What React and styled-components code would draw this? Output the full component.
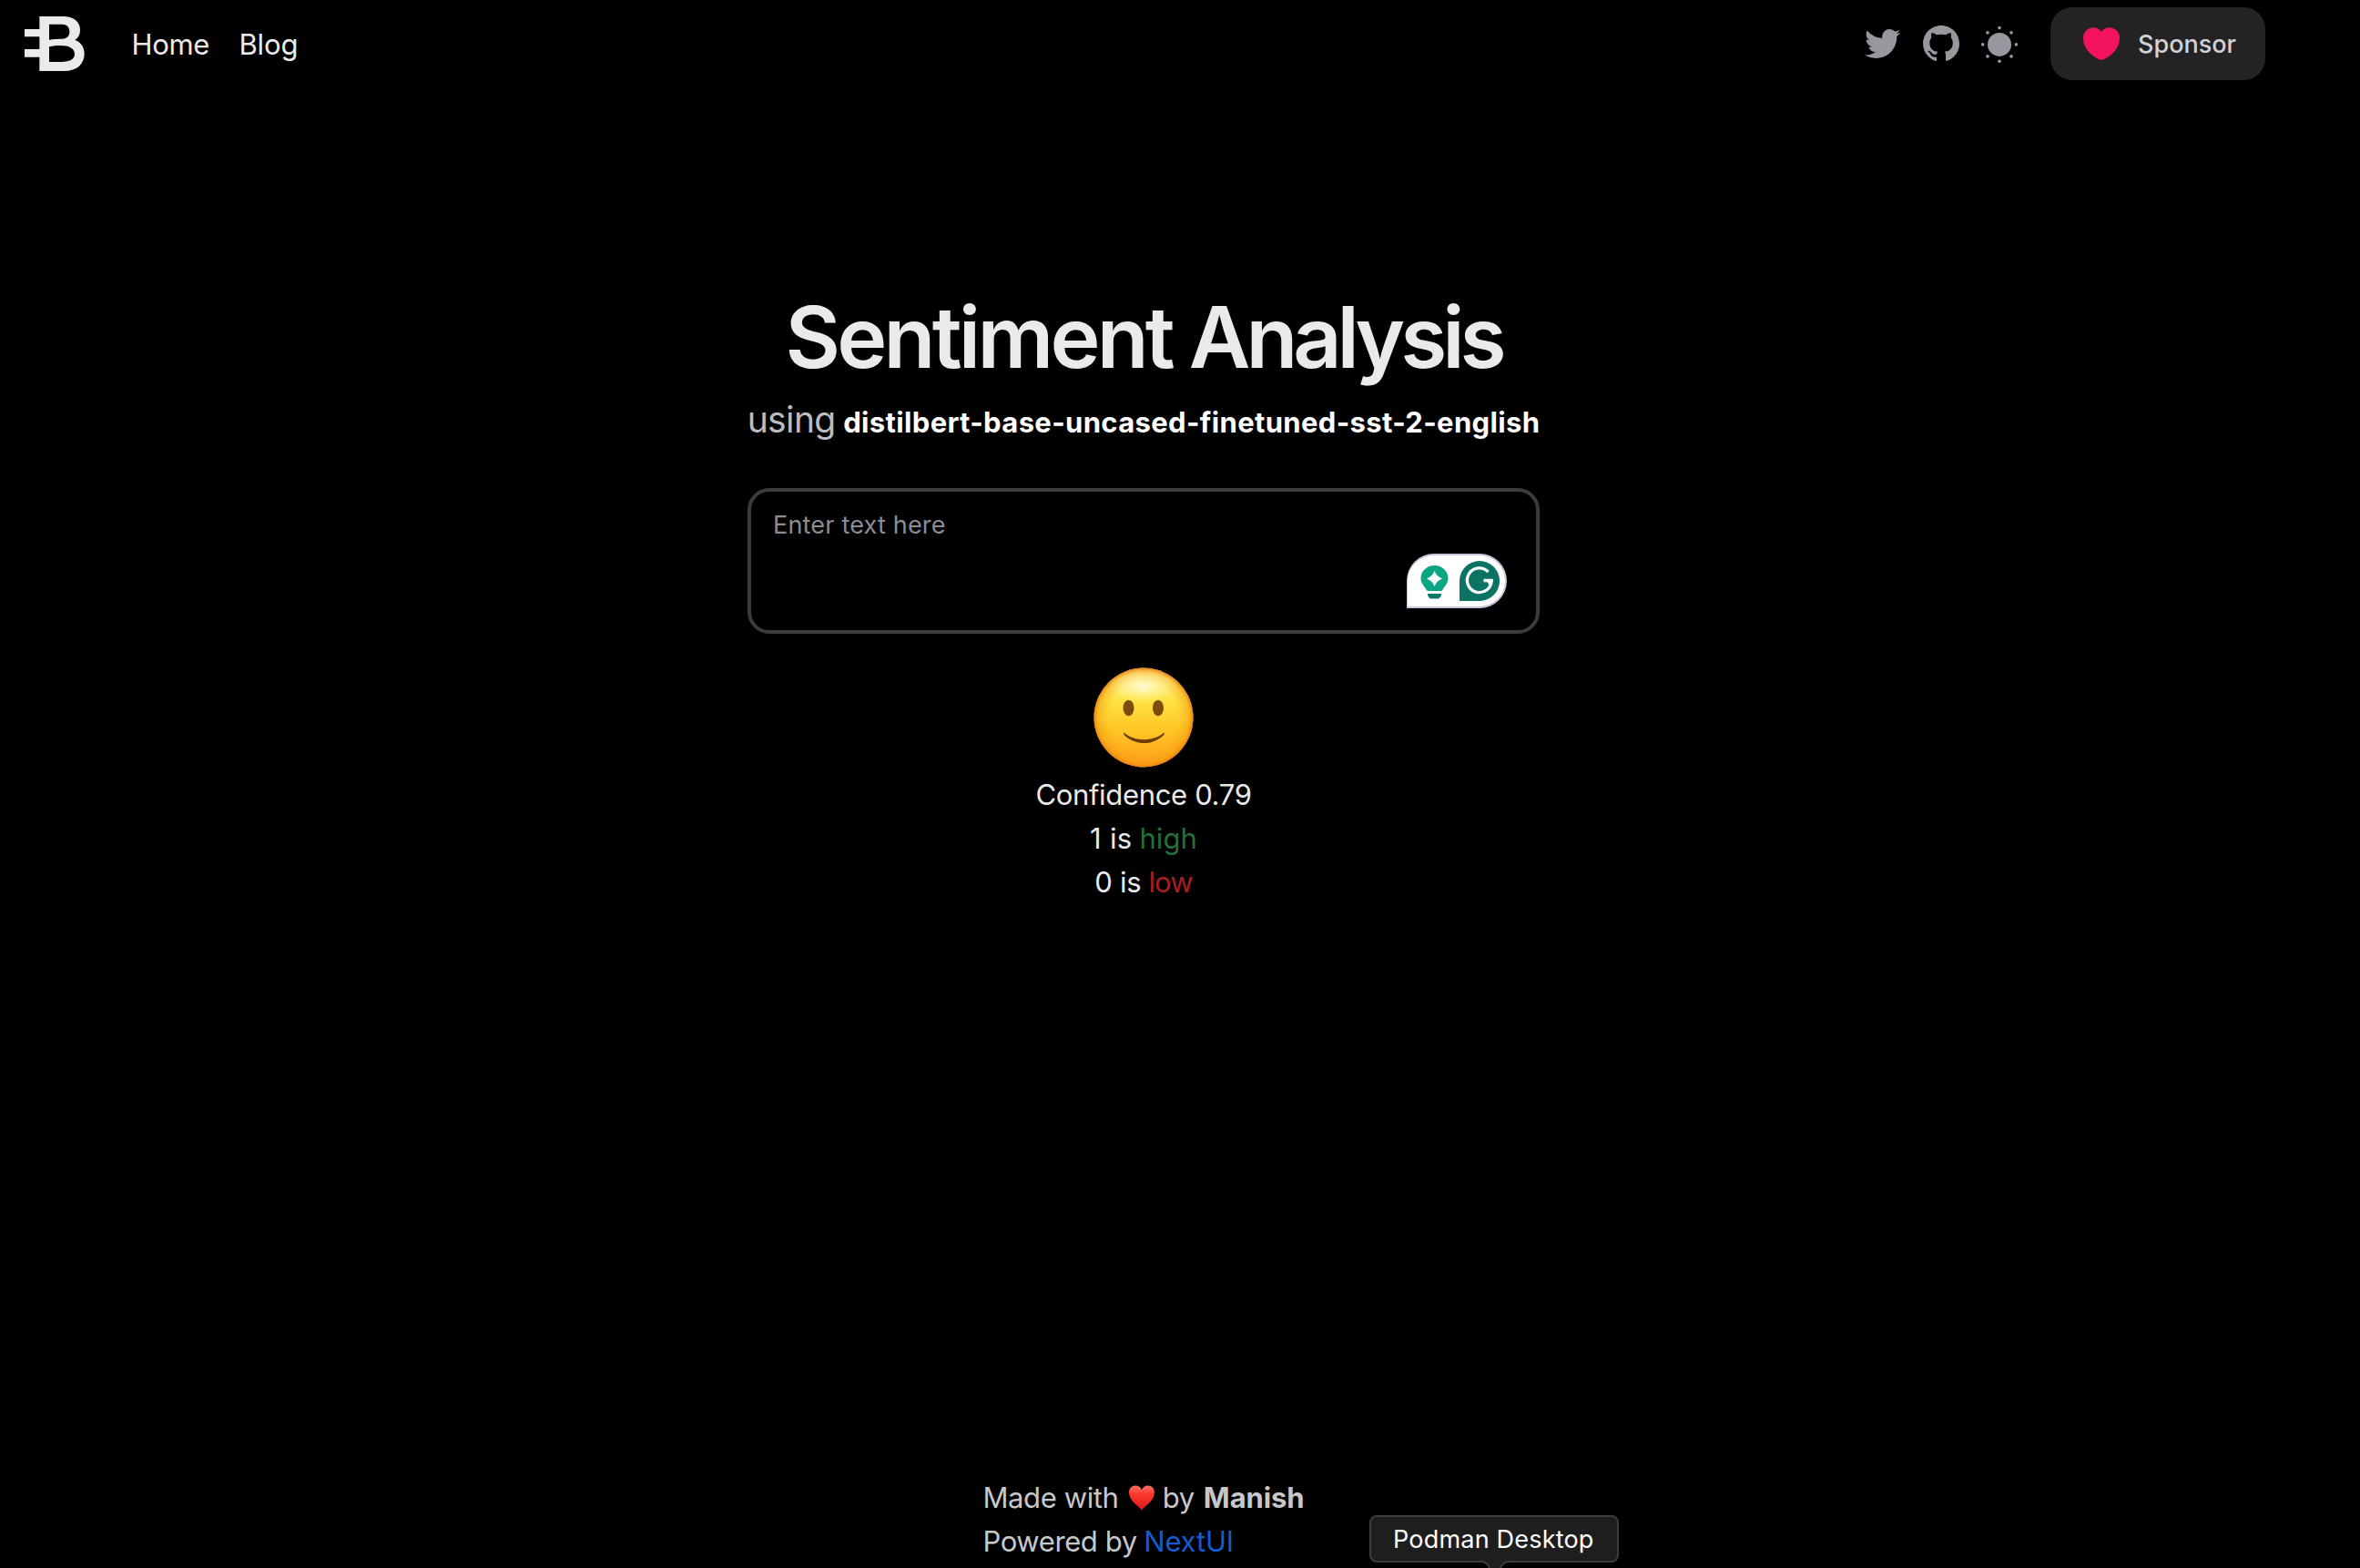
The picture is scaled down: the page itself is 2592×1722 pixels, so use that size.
import React from "react";
import styled, { createGlobalStyle } from "styled-components";
import { BiLogoTwitter, BiLogoGithub } from "react-icons/bi";

const GlobalStyle = createGlobalStyle`
  *, *::before, *::after { box-sizing: border-box; }
  body {
    margin: 0;
    background: #000;
    color: #eaeaea;
    font-family: Inter, "Liberation Sans", sans-serif;
    overflow: hidden;
  }
`;

const Page = styled.div`
  display: flex;
  flex-direction: column;
  width: 2512px;
  height: 1722px;
`;

const Navbar = styled.nav`
  display: flex;
  align-items: center;
  height: 96px;
  padding: 0 24px;
`;

const Logo = styled.svg`
  width: 67px;
  height: 60px;
  margin-left: 3px;
`;

const NavLinks = styled.div`
  display: flex;
  gap: 32.5px;
  margin-left: 50.5px;
  padding-top: 1px;
`;

const NavLink = styled.a`
  font-size: 31px;
  line-height: 48px;
  letter-spacing: ${(p) => p.$tracking}px;
`;

const NavActions = styled.div`
  display: flex;
  align-items: center;
  gap: 16px;
  margin-left: auto;
  color: #98979f;
`;

const SunIcon = styled.svg`
  width: 48px;
  height: 48px;
`;

const SponsorButton = styled.button`
  display: flex;
  align-items: center;
  width: 236px;
  height: 80px;
  margin-left: 16px;
  padding: 0 0 0 32px;
  border: 0;
  border-radius: 24px;
  background: #232326;
  color: #d2d2d6;
  font: 500 27px/40px Inter, sans-serif;
`;

const SponsorLabel = styled.span`
  padding-top: 2px;
`;

const SponsorHeart = styled.svg`
  width: 48px;
  height: 48px;
  margin-right: 16px;
`;

const Main = styled.main`
  display: flex;
  flex-direction: column;
  align-items: center;
  flex: 1;
  padding-top: 226px;
`;

const Title = styled.h1`
  margin: 0;
  font-size: 93px;
  font-weight: 600;
  line-height: 96px;
  letter-spacing: -4.45px;
  white-space: nowrap;
`;

const TitleWord = styled.span`
  letter-spacing: ${(p) => p.$tracking}px;
`;

const Subtitle = styled.h2`
  display: flex;
  align-items: baseline;
  gap: 8.5px;
  margin: 15px 0 0;
  font-size: 39px;
  font-weight: 400;
  line-height: 56px;
  letter-spacing: -0.6px;
  color: #bcbcc0;
  white-space: nowrap;
`;

const ModelName = styled.strong`
  font-size: 31px;
  font-weight: 700;
  letter-spacing: 0.35px;
  color: #fff;
`;

const Field = styled.div`
  position: relative;
  width: 870px;
  height: 160px;
  margin-top: 44px;
`;

const TextInput = styled.textarea`
  display: block;
  width: 100%;
  height: 100%;
  padding: 17px 24px 15px;
  border: 4px solid #3b3b40;
  border-radius: 24px;
  outline: 0;
  background: transparent;
  color: #eaeaea;
  resize: none;
  font: 400 27px/40px Inter, sans-serif;
  letter-spacing: 0.19px;

  &::placeholder {
    color: #8d8c93;
    opacity: 1;
  }
`;

const AssistantBadge = styled.div`
  position: absolute;
  right: 36px;
  bottom: 28px;
  display: flex;
  align-items: center;
  width: 110px;
  height: 60px;
  padding-left: 14px;
  gap: 12px;
  border: 2px solid #c9c6da;
  border-left-width: 1px;
  border-radius: 30px 30px 30px 0;
  background: #fff;
`;

const Bulb = styled.svg`
  width: 31px;
  height: 37px;
  margin-top: 2px;
`;

const GMark = styled.svg`
  width: 44px;
  height: 44px;
`;

const Smiley = styled.svg`
  width: 110px;
  height: 110px;
  margin-top: 37px;
`;

const Result = styled.div`
  display: flex;
  flex-direction: column;
  align-items: center;
  margin-top: 6px;
`;

const ResultLine = styled.p`
  display: flex;
  gap: ${(p) => p.$gap || 0}px;
  margin: 0;
  font-size: 31px;
  line-height: 48px;
  letter-spacing: -0.33px;
`;

const Level = styled.span`
  color: ${(p) => p.$color};
  letter-spacing: ${(p) => p.$tracking}px;
`;

const Footer = styled.footer`
  width: 353px;
  margin: 0 auto;
  padding-bottom: 5px;
  color: #c8c8ca;
  font-size: 31px;
  line-height: 48px;
`;

const FooterLine = styled.div`
  display: flex;
  gap: ${(p) => p.$gap}px;
  letter-spacing: -0.4px;
  white-space: nowrap;
`;

const FooterHeart = styled.svg`
  width: 30px;
  height: 30px;
  margin: 9px -1px 0 1.5px;
`;

const Author = styled.strong`
  font-weight: 700;
  letter-spacing: -0.1px;
`;

const FooterLink = styled.a`
  color: #155bd0;
  letter-spacing: -0.2px;
`;

const Tooltip = styled.div`
  position: absolute;
  left: 1504px;
  top: 1664px;
  width: 274px;
  height: 52px;
  padding: 1px 0 0 24px;
  border: 2px solid #3c3c3c;
  border-radius: 8px;
  background: #1e1e1e;
  color: #fff;
  font-size: 27px;
  line-height: 48px;
  letter-spacing: 0.2px;
`;

const TooltipArrow = styled.svg`
  position: absolute;
  left: 121px;
  top: 48px;
  width: 30px;
  height: 8px;
`;

const rays = [
  [12, 2], [19.1, 4.9], [22, 12], [19.1, 19.1],
  [12, 22], [4.9, 19.1], [2, 12], [4.9, 4.9],
];

function LogoMark() {
  return (
    <Logo viewBox="81 54 201 180" fill="#eaeaea" fillRule="evenodd">
      <path d="M130 54H207C243 54 264 72 264 98C264 114 258 125 247 131C267 139 278 156 278 177C278 210 254 234 212 234H130V188H81V162H130V121H81V96H130ZM162 80V132C178 127 188 129 206 128C221 126 229 119 229 104C229 88 220 80 204 80ZM162 154V204H202C230 204 246 195 246 178C246 160 228 150 200 150C184 150 176 151 162 154Z" />
    </Logo>
  );
}

function HeartShape() {
  return (
    <SponsorHeart viewBox="0 0 24 24" fill="#f31260">
      <path d="M12.62 20.81c-.34.12-.9.12-1.24 0C8.48 19.82 2 15.69 2 8.69 2 5.6 4.49 3.1 7.56 3.1c1.82 0 3.43.88 4.44 2.24a5.53 5.53 0 0 1 4.44-2.24C19.51 3.1 22 5.6 22 8.69c0 7-6.48 11.13-9.38 12.12Z" />
    </SponsorHeart>
  );
}

function SmileyFace() {
  return (
    <Smiley viewBox="0 0 110 110">
      <defs>
        <linearGradient id="face" x1="0" y1="0" x2="0" y2="1">
          <stop offset="0" stopColor="#fff3a0" />
          <stop offset="0.3" stopColor="#ffe548" />
          <stop offset="0.6" stopColor="#ffc926" />
          <stop offset="1" stopColor="#ff9f1c" />
        </linearGradient>
        <radialGradient id="edge" cx="0.5" cy="0.5" r="0.5">
          <stop offset="0.7" stopColor="#f59a10" stopOpacity="0" />
          <stop offset="0.92" stopColor="#f59a10" stopOpacity="0.5" />
          <stop offset="1" stopColor="#e87c10" stopOpacity="0.95" />
        </radialGradient>
        <radialGradient id="shine" cx="0.5" cy="0.5" r="0.5">
          <stop offset="0" stopColor="#fffce0" stopOpacity="0.9" />
          <stop offset="1" stopColor="#fff6a8" stopOpacity="0" />
        </radialGradient>
      </defs>
      <circle cx="55" cy="55" r="54.5" fill="url(#face)" />
      <circle cx="55" cy="55" r="54.5" fill="url(#edge)" />
      <ellipse cx="54" cy="21" rx="38" ry="18" fill="url(#shine)" />
      <ellipse cx="38.5" cy="44.5" rx="6" ry="8.8" fill="#7d4c0c" />
      <ellipse cx="71" cy="44.5" rx="6" ry="8.8" fill="#7d4c0c" />
      <path d="M33.5 71.5C45 81.8 66 81.8 77.5 71.5C78.2 73 77.5 74 76.5 75C64 85.8 47 85.8 34.5 75C33.5 74 32.8 73 33.5 71.5Z" fill="#6b3d08" />
    </Smiley>
  );
}

function Assistant() {
  return (
    <AssistantBadge>
      <Bulb viewBox="0 0 31 37">
        <path d="M15.5 0C24 0 30.5 6.3 30.5 14.3C30.5 19 27.5 22 25 25.5C24.4 27 24 28 22.5 28H8.5C7 28 6.6 27 6 25.5C3.5 22 0.5 19 0.5 14.3C0.5 6.3 7 0 15.5 0Z" fill="#0aa583" />
        <path d="M8 31H23C23 34.5 21 36.5 18.5 36.5H12.5C10 36.5 8 34.5 8 31Z" fill="#087a68" />
        <path d="M15.5 6Q17.800 12.200 24 14.500Q17.800 16.800 15.500 23Q13.200 16.800 7 14.500Q13.200 12.200 15.500 6Z" fill="#fff" />
      </Bulb>
      <GMark viewBox="0 0 44 44">
        <path d="M0 44V22A22 22 0 1 1 22 44Z" fill="#0b7363" />
        <path d="M31.5 12A13.4 13.4 0 1 0 35.2 21.5H26.5" fill="none" stroke="#fff" strokeWidth="3.3" />
        <path d="M30 21.5H37L33 28Z" fill="#fff" />
      </GMark>
    </AssistantBadge>
  );
}

export default function App() {
  return (
    <>
      <GlobalStyle />
      <Page>
        <Navbar>
          <LogoMark />
          <NavLinks>
            <NavLink $tracking={-0.35}>Home</NavLink>
            <NavLink $tracking={-0.13}>Blog</NavLink>
          </NavLinks>
          <NavActions>
            <BiLogoTwitter size={48} />
            <BiLogoGithub size={48} />
            <SunIcon viewBox="-1.1 -1.6 26.2 26.2" fill="currentColor">
              <circle cx="12" cy="12" r="7.1" />
              {rays.map(([x, y]) => (
                <circle key={`${x}-${y}`} cx={x} cy={y} r="1" />
              ))}
            </SunIcon>
            <SponsorButton>
              <HeartShape />
              <SponsorLabel>Sponsor</SponsorLabel>
            </SponsorButton>
          </NavActions>
        </Navbar>

        <Main>
          <Title>
            <TitleWord $tracking={-3.75}>Sentiment</TitleWord>{" "}
            <TitleWord $tracking={-5.1}>Analysis</TitleWord>
          </Title>
          <Subtitle>
            <span>using</span>
            <ModelName>distilbert-base-uncased-finetuned-sst-2-english</ModelName>
          </Subtitle>
          <Field>
            <TextInput placeholder="Enter text here" />
            <Assistant />
          </Field>
          <SmileyFace />
          <Result>
            <ResultLine>Confidence 0.79</ResultLine>
            <ResultLine $gap={8}>
              <Level $tracking={0.3}>1 is</Level>
              <Level $color="#246e38" $tracking={0.1}>high</Level>
            </ResultLine>
            <ResultLine $gap={8}>
              <Level $tracking={-0.26}>0 is</Level>
              <Level $color="#a81e24" $tracking={-0.9}>low</Level>
            </ResultLine>
          </Result>
        </Main>

        <Footer>
          <FooterLine $gap={10}>
            <span>Made with</span>
            <FooterHeart viewBox="0 0 30 30">
              <defs>
                <linearGradient id="love" x1="0" y1="0" x2="0" y2="1">
                  <stop offset="0" stopColor="#ff7264" />
                  <stop offset="0.35" stopColor="#fb3a2e" />
                  <stop offset="1" stopColor="#e0141a" />
                </linearGradient>
              </defs>
              <path d="M15 29.5C12 24.5 0 19 0 8.5C0 3.5 3.5 0.5 7.5 0.5C11 0.5 13.8 2.5 15 5.5C16.2 2.5 19 0.5 22.5 0.5C26.5 0.5 30 3.5 30 8.5C30 19 18 24.5 15 29.5Z" fill="url(#love)" />
            </FooterHeart>
            <span>by</span>
            <Author>Manish</Author>
          </FooterLine>
          <FooterLine $gap={7.5}>
            <span>Powered by</span>
            <FooterLink>NextUI</FooterLink>
          </FooterLine>
        </Footer>
      </Page>
      <Tooltip>
        Podman Desktop
        <TooltipArrow viewBox="0 0 30 8">
          <path d="M1 0V2Q5 2 8 6L9 8H21L22 6Q25 2 29 2V0Z" fill="#1e1e1e" />
          <path d="M0 1Q5 1 8 6L9 8M30 1Q25 1 22 6L21 8" fill="none" stroke="#3c3c3c" strokeWidth="2" />
        </TooltipArrow>
      </Tooltip>
    </>
  );
}
